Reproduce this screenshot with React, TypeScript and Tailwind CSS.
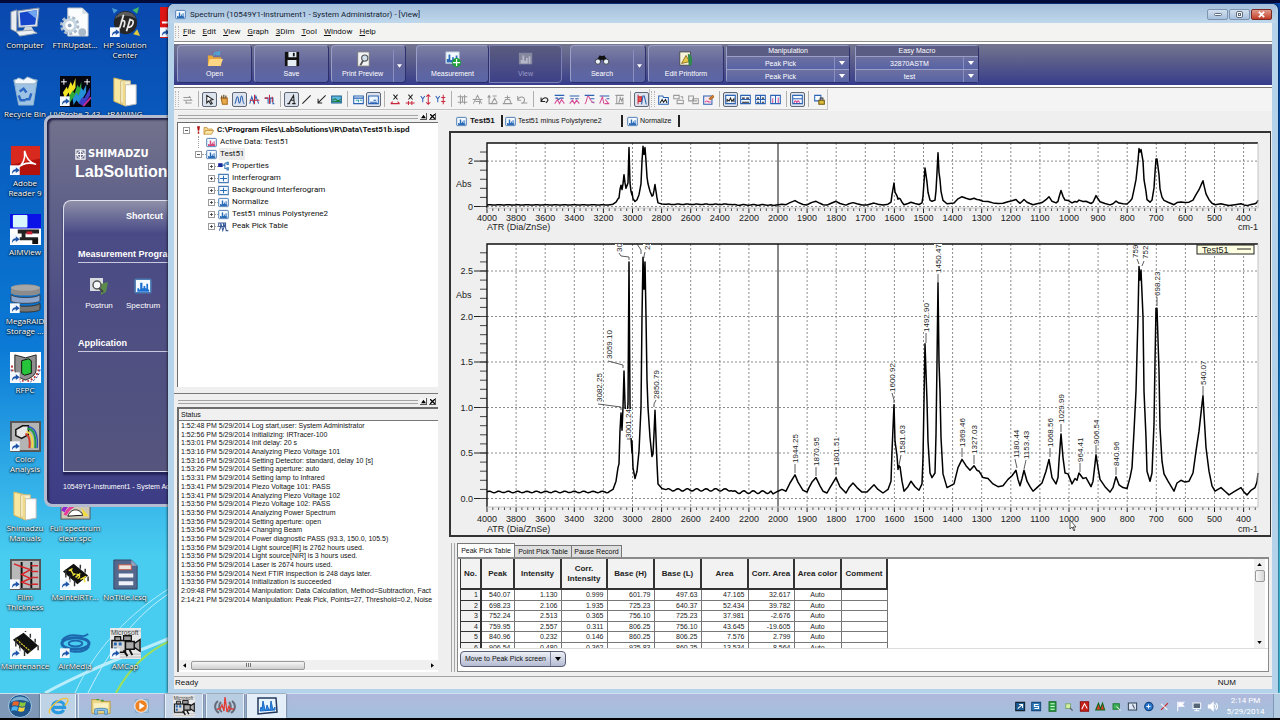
import type { ReactNode } from 'react';

type Stroke = [d: string, color: string, fill?: string];

function Glyph({ paths, className, box = 16, width = 1.5 }: { paths: Stroke[]; className: string; box?: number; width?: number }) {
  return (
    <svg viewBox={`0 0 ${box} ${box}`} className={className} fill="none" aria-hidden="true">
      {paths.map(([d, color, fill], i) => (
        <path key={i} d={d} stroke={color} strokeWidth={width} fill={fill ?? 'none'} />
      ))}
    </svg>
  );
}

/* ---------- spectrum data ---------- */

// [distance from the 4000 cm-1 edge, absorbance]
const PEAK_POINTS: [number, number][] = [
  [123, 0.08], [126, 0.1], [129, 0.19], [131, 0.34], [132, 0.38], [133, 0.75], [134, 0.94], [135, 0.75],
  [136, 1.0], [137, 1.4], [138, 1.04], [139, 0.8], [141, 1.04], [142, 2.6], [143, 1.04], [144, 0.67],
  [145, 0.5], [145, 0.63], [146, 0.34], [148, 0.22], [150, 0.3], [152, 0.52], [154, 1.0], [155, 2.0],
  [156, 2.65], [157, 2.3], [158, 2.6], [159, 2.0], [160, 1.3], [161, 1.0], [163, 0.67], [165, 0.46],
  [166, 0.49], [167, 0.71], [168, 0.97], [169, 0.67], [170, 0.38], [171, 0.16], [175, 0.11], [178, 0.1],
];

const TAIL_POINTS: [number, number][] = [
  [286, 0.05], [291, 0.08], [295, 0.1], [299, 0.08], [303, 0.17], [308, 0.26], [311, 0.18], [316, 0.09],
  [320, 0.07], [322, 0.12], [325, 0.18], [329, 0.23], [333, 0.14], [336, 0.08], [340, 0.06], [343, 0.12],
  [349, 0.23], [353, 0.13], [359, 0.06], [362, 0.12], [366, 0.17], [370, 0.12], [375, 0.07], [380, 0.07],
  [387, 0.15], [391, 0.1], [396, 0.06], [401, 0.1], [404, 0.19], [405, 0.52], [407, 1.03], [408, 0.63],
  [410, 0.47], [411, 0.32], [412, 0.36], [413, 0.35], [415, 0.19], [417, 0.08], [421, 0.13], [424, 0.19],
  [428, 0.13], [432, 0.09], [435, 0.16], [436, 0.45], [437, 1.07], [438, 1.7], [440, 1.07], [441, 0.63],
  [443, 0.28], [445, 0.23], [448, 0.28], [449, 0.7], [450, 1.5], [451, 2.37], [452, 1.5], [453, 1.18],
  [454, 0.67], [456, 0.27], [460, 0.12], [467, 0.16], [471, 0.34], [475, 0.43], [479, 0.36], [483, 0.31],
  [487, 0.36], [490, 0.31], [492, 0.3], [496, 0.23], [501, 0.22], [506, 0.16], [511, 0.13], [516, 0.14],
  [521, 0.21], [525, 0.25], [529, 0.31], [531, 0.21], [533, 0.14], [535, 0.22], [537, 0.31], [540, 0.19],
  [543, 0.13], [546, 0.08], [550, 0.12], [555, 0.17], [559, 0.3], [562, 0.43], [565, 0.23], [569, 0.16],
  [571, 0.23], [572, 0.41], [574, 0.71], [576, 0.45], [578, 0.28], [581, 0.27], [585, 0.16], [588, 0.22],
  [590, 0.2], [592, 0.28], [596, 0.22], [599, 0.23], [604, 0.13], [606, 0.19], [608, 0.38], [609, 0.48],
  [611, 0.34], [613, 0.21], [618, 0.13], [623, 0.07], [626, 0.12], [629, 0.24], [632, 0.15], [636, 0.12],
  [640, 0.11], [643, 0.23], [645, 0.34], [647, 0.74], [649, 1.18], [651, 2.0], [652, 2.55], [653, 2.4],
  [654, 2.51], [656, 2.0], [657, 1.18], [659, 0.67], [660, 0.3], [663, 0.19], [665, 0.28], [667, 0.82],
  [668, 1.5], [669, 2.09], [670, 2.09], [672, 1.4], [673, 0.78], [675, 0.41], [677, 0.27], [681, 0.19],
  [687, 0.08], [690, 0.17], [694, 0.2], [698, 0.18], [702, 0.19], [706, 0.28], [709, 0.52], [712, 0.74],
  [715, 1.04], [716, 1.13], [717, 0.93], [719, 0.56], [722, 0.3], [725, 0.14], [728, 0.08], [734, 0.12],
  [738, 0.08], [742, 0.04], [748, 0.08], [754, 0.12], [757, 0.07], [760, 0.04], [764, 0.09], [768, 0.12],
  [770, 0.18], [771, 0.28],
];

function ripple(from: number, to: number, level: number, size: number): [number, number][] {
  const out: [number, number][] = [];
  for (let x = from; x < to; x += 1) {
    out.push([x, level + size * Math.sin(x / 1.5)]);
  }
  return out;
}

const SPECTRUM = [
  ...ripple(0, 122, 0.072, 0.008),
  ...PEAK_POINTS,
  ...ripple(180, 245, 0.095, 0.013),
  ...ripple(246, 285, 0.07, 0.015),
  ...TAIL_POINTS,
];

const WAVENUMBERS = [
  4000, 3800, 3600, 3400, 3200, 3000, 2800, 2600, 2400, 2200, 2000, 1900, 1800, 1700, 1600, 1500, 1400, 1300, 1200,
  1100, 1000, 900, 800, 700, 600, 500, 400,
];

// text, x, bottom of the text, leader line
const PEAK_LABELS: [string, number, number, string][] = [
  ['3059.10', 122, 115, 'M121 117L136 121V124'],
  ['3082.25', 112, 158, 'M111 160L134 163V166'],
  ['30', 132, 8, 'M132 9L134 12L142 13V16'],
  ['', 150, 4, 'M150 0L154 6V10'],
  ['28', 160, 6, 'M158 8L157 12V14'],
  ['3001.24', 141, 194, 'M140 195h3'],
  ['2850.79', 169, 155, 'M169 156L167 160V163'],
  ['1944.25', 308, 219, 'M308 220V229'],
  ['1870.95', 329, 222, 'M329 223V232'],
  ['1801.51', 349, 222, 'M349 223V231'],
  ['1600.92', 405, 148, 'M405 149L407 156V159'],
  ['1581.63', 415, 210, 'M414 211L412 221'],
  ['1492.90', 439, 88, 'M439 89V99'],
  ['1450.47', 451, 29, 'M451 30V38'],
  ['1369.46', 475, 203, 'M475 204V213'],
  ['1327.03', 487, 210, 'M487 211V220'],
  ['1180.44', 529, 214, 'M528 215L530 224'],
  ['1153.43', 539, 215, 'M539 216L537 225'],
  ['1068.56', 563, 203, 'M563 204V213'],
  ['1029.99', 574, 179, 'M574 180V188'],
  ['964.41', 593, 218, 'M593 219V228'],
  ['906.54', 609, 200, 'M609 201V209'],
  ['840.96', 629, 222, 'M629 223V231'],
  ['759', 648, 14, 'M650 15L652 20'],
  ['752', 658, 15, 'M657 17L655 22'],
  ['698.23', 670, 52, 'M670 53V62'],
  ['540.07', 716, 141, 'M716 142V151'],
];

interface GraphProps {
  height: number;
  top: number;
  plotHeight: number;
  zero: number;
  perUnit: number;
  majors: [number, string][];
  minorStep: number;
  maxTick: number;
  absY: number;
  labelGap: number;
  captionGap: number;
  children?: ReactNode;
}

function Graph({ height, top, plotHeight, zero, perUnit, majors, minorStep, maxTick, absY, labelGap, captionGap, children }: GraphProps) {
  const y = (v: number) => zero - v * perUnit;
  const points = SPECTRUM.map(([px, v]) => `${px},${y(v).toFixed(1)}`).join(' ');
  const minors = Array.from({ length: Math.round(maxTick / minorStep) + 1 }, (_, i) => i * minorStep);
  return (
    <svg viewBox={`0 0 819 ${height}`} className="block w-full font-['Liberation_Sans',sans-serif] text-[9px]" role="img">
      <g transform={`translate(36 ${top})`}>
        <rect width="771" height={plotHeight} fill="#fff" />
        {WAVENUMBERS.map((wn, i) => (
          <g key={wn}>
            {i > 0 && (
              <line
                x1={i * 29.1}
                x2={i * 29.1}
                y2={plotHeight}
                stroke={wn === 2000 ? '#111' : '#8b8b8b'}
                strokeDasharray={wn === 2000 ? undefined : '2 2'}
              />
            )}
            <line x1={i * 29.1} x2={i * 29.1} y1={plotHeight} y2={plotHeight + 5} stroke="#222" />
            {[1, 2, 3, 4].map((n) => (
              <line key={n} x1={(i + n / 5) * 29.1} x2={(i + n / 5) * 29.1} y1={plotHeight} y2={i === 26 && n > 2 ? plotHeight : plotHeight + 3} stroke="#555" />
            ))}
            <text x={i * 29.1} y={plotHeight + labelGap} textAnchor="middle" fill="#222">{wn}</text>
          </g>
        ))}
        {majors.map(([v, label]) => (
          <g key={label}>
            <line x2="771" y1={y(v)} y2={y(v)} stroke="#8b8b8b" strokeDasharray="2 2" />
            <line x1="-13" x2="0" y1={y(v)} y2={y(v)} stroke="#222" />
            <text x="-14" y={y(v) + 3} textAnchor="end" fill="#222">{label}</text>
          </g>
        ))}
        {minors.map((v) => (
          <line key={v} x1="-7" x2="0" y1={y(v)} y2={y(v)} stroke="#444" />
        ))}
        <text x="-31" y={absY} fill="#222">Abs</text>
        <polyline points={points} fill="none" stroke="#000" strokeWidth="1.5" strokeLinejoin="round" />
        <path d={`M771 0H0V${plotHeight}`} stroke="#111" strokeWidth="1.4" fill="none" />
        <path d={`M0 ${plotHeight}H771V0`} stroke="#c4c4c4" fill="none" />
        {children}
        <text x="0" y={plotHeight + captionGap} fill="#222">ATR (Dia/ZnSe)</text>
        <text x="771" y={plotHeight + captionGap} textAnchor="end" fill="#222">cm-1</text>
      </g>
    </svg>
  );
}

function PeakLabels({ plotHeight }: { plotHeight: number }) {
  return (
    <>
      <clipPath id="plot-area">
        <rect width="771" height={plotHeight} />
      </clipPath>
      <g clipPath="url(#plot-area)" className="text-[8px]">
        {PEAK_LABELS.map(([text, x, bottom, leader]) => (
          <g key={leader}>
            {text && <rect x={x - 4} y={bottom - text.length * 4 - 1} width="8" height={text.length * 4 + 1} fill="#fff" />}
            <path d={leader} stroke="#333" strokeWidth="0.8" fill="none" />
            <text transform={`translate(${x + 3} ${bottom}) rotate(-90)`} fill="#222">{text}</text>
          </g>
        ))}
      </g>
      <rect x="710" y="1" width="57" height="9" fill="#ffffe1" stroke="#222" />
      <text x="715" y="9" fill="#222">Test51</text>
      <path d="M750 5H764" stroke="#222" />
    </>
  );
}

/* ---------- small shared pictures ---------- */

function ChartIcon({ color = '#2a6cb8', className }: { color?: string; className: string }) {
  return (
    <svg viewBox="0 0 16 16" className={className} aria-hidden="true">
      <rect x="1" y="2" width="14" height="12" rx="1" fill="#f4faff" stroke="#4c7cb4" strokeWidth="1.400" />
      <path d="M3 13V10h1.500v1h1V5h2v5h1V8h1.500v2h1V6h1.500v5h1v2z" fill={color} />
    </svg>
  );
}

function BinocularsIcon() {
  return (
    <svg viewBox="0 0 20 16" className="h-3 w-4" aria-hidden="true">
      <path d="M2 11L7 3l2 1h2l2-1 5 8-5 2-2-4H9l-2 4z" fill="#111" />
      <circle cx="4.500" cy="11.500" r="3.500" fill="#e8f2fa" stroke="#222" />
      <circle cx="15.500" cy="11.500" r="3.500" fill="#e8f2fa" stroke="#222" />
    </svg>
  );
}

function AmCapIcon({ className }: { className: string }) {
  return (
    <svg viewBox="0 0 32 32" className={className} aria-hidden="true">
      <rect width="32" height="32" fill="#e8e8e8" />
      <path d="M0 3h32M0 27h32M0 30h32" stroke="#bbb" />
      <text x="1" y="7" fontSize="7" fill="#444" className="font-['Liberation_Sans',sans-serif]">Microsoft</text>
      <path d="M2 13h14v12H2z" fill="#d6d6d6" stroke="#111" strokeWidth="1.500" />
      <path d="M4 15h3v3H4zM9 15h3v3H9zM4 20h3v3H4z" fill="#2867b0" />
      <path d="M5 9h6v4H5zM14 8h8v5h-8z" fill="#999" stroke="#111" strokeWidth="1.300" />
      <path d="M16 14h9v8h-9zM25 16l6-4v12l-6-4z" fill="#aaa" stroke="#111" strokeWidth="1.500" />
      <path d="M14 23l4 6M20 22l3 6" stroke="#111" strokeWidth="2" />
    </svg>
  );
}

/* ---------- desktop ---------- */

function Folder() {
  return (
    <svg viewBox="0 0 32 32" className="size-full">
      <path d="M4 2l12 3v26L4 26z" fill="#f7e7a0" stroke="#d3b45c" />
      <path d="M11 5h10v23H11z" fill="#f6f0d0" stroke="#ccb878" />
      <path d="M16 9h11v20l-11 2z" fill="#fff" stroke="#b9b9b9" />
      <path d="M16 31V7l-3-1v23z" fill="#efd98a" />
    </svg>
  );
}

const DESKTOP_ICONS: { label: string; col: number; row: number; shortcut?: boolean; art: ReactNode }[] = [
  {
    label: 'Computer', col: 1, row: 1,
    art: (
      <>
        <path d="M1 5l6-2v23l-6-3z" fill="#e9edf2" stroke="#8b98a8" />
        <path d="M8 4l22-3-2 19-19 1z" fill="#dfe6ee" stroke="#8b98a8" />
        <path d="M10 6l18-3-2 15-15 1z" fill="#1545c8" />
        <path d="M18 5l10-2-1 9z" fill="#6fa5f0" />
        <path d="M16 20l6 0 3 5H13z" fill="#cfd6de" />
        <path d="M6 25l17-1 5 3-18 3z" fill="#eef1f5" stroke="#9aa6b3" />
      </>
    ),
  },
  {
    label: 'Recycle Bin', col: 1, row: 2,
    art: (
      <>
        <path d="M4 4h24l-4 26H9z" fill="#b9d6ea" stroke="#8fb4cf" fillOpacity="0.85" />
        <path d="M4 5l5-3 5 2 4-3 5 2 5 2-3 3H6z" fill="#f1f7fb" stroke="#9db7c9" />
        <path d="M10 16l4-3 3 4M9 20l2 5h5M22 18l-2 6-4 0" stroke="#2b68c4" strokeWidth="2.500" fill="none" />
      </>
    ),
  },
  {
    label: 'Adobe\nReader 9', col: 1, row: 3, shortcut: true,
    art: (
      <>
        <rect x="1" y="1" width="30" height="30" fill="#b3120d" />
        <path d="M1 1h30v13L1 20z" fill="#d8291e" />
        <path d="M15 6c2 8 5 12 12 14-8-3-14-1-20 4 6-3 9-9 8-18z" stroke="#fff" strokeWidth="1.600" fill="none" />
      </>
    ),
  },
  {
    label: 'AIMView', col: 1, row: 4, shortcut: true,
    art: (
      <>
        <rect width="32" height="32" fill="#fff" />
        <path d="M0 0h32v15H0z" fill="#0b12e8" />
        <rect x="3" y="1" width="15" height="13" rx="1" fill="#d8f6fb" />
        <path d="M8 16h22v4H8zM12 20h4v4h-4zM5 24h24v3H5z" fill="#222" />
        <path d="M17 18h6v3h-6z" fill="#c23" />
        <path d="M23 26h6v5h-6z" fill="#111" />
      </>
    ),
  },
  {
    label: 'MegaRAID\nStorage ...', col: 1, row: 5, shortcut: true,
    art: (
      <>
        <path d="M1 5c0-5 30-5 30 0v5c0 4-30 4-30 0z" fill="#8c8c8c" />
        <path d="M1 12c4 4 26 4 30 0v6c0 4-30 4-30 0z" fill="#8fa6cc" stroke="#3a4250" />
        <path d="M1 21c4 4 26 4 30 0v6c0 4-30 4-30 0z" fill="#767676" stroke="#333" />
        <ellipse cx="16" cy="5" rx="15" ry="3" fill="#a7a7a7" />
      </>
    ),
  },
  {
    label: 'RFPC', col: 1, row: 6, shortcut: true,
    art: (
      <>
        <rect width="32" height="32" fill="#fff" />
        <path d="M5 3l11 3 11-3v15c0 6-6 9-11 11C10 27 5 24 5 18z" fill="#8f8f8f" stroke="#222" />
        <path d="M12 9l7-2 3 2v13l-7 2-3-2z" fill="#25c43a" stroke="#111" />
        <path d="M2 14c0 9 5 14 12 16M30 14c0 9-5 14-12 16" stroke="#b33" strokeWidth="2" strokeDasharray="2 2" fill="none" />
        <path d="M1 18c1 7 5 11 10 13M31 18c-1 7-5 11-10 13" stroke="#223a9c" strokeDasharray="2 2" fill="none" />
      </>
    ),
  },
  {
    label: 'Color\nAnalysis', col: 1, row: 7, shortcut: true,
    art: (
      <>
        <rect x="1" y="1" width="30" height="30" fill="#b4b4b4" stroke="#555" strokeWidth="2" />
        <path d="M6 9l7-4h6v9l-7 4-6-3z" fill="#e8e8e8" stroke="#111" strokeWidth="1.500" />
        <path d="M19 6c8 1 10 10 9 22" stroke="#2a50c4" strokeWidth="1.500" fill="none" />
        <path d="M18 8c7 0 9 8 8 20" stroke="#1c9a45" strokeWidth="2" fill="none" />
        <path d="M17 11c5 1 7 8 6 17" stroke="#f0d93b" strokeWidth="2" fill="none" />
        <path d="M16 13c4 2 5 8 4 15" stroke="#d63a2a" strokeWidth="2" fill="none" />
      </>
    ),
  },
  { label: 'Shimadzu\nManuals', col: 1, row: 8, art: <Folder /> },
  {
    label: 'Film\nThickness', col: 1, row: 9, shortcut: true,
    art: (
      <>
        <rect x="1" y="1" width="30" height="30" fill="#b9b9b9" stroke="#555" strokeWidth="2" />
        <path d="M12 3v27M22 3v27" stroke="#111" strokeWidth="2" />
        <path d="M4 5l8 3 9 3-9 5 9 4-9 4 9 3M22 7h7M22 13h7M22 19h7M22 26h7" stroke="#d8262a" strokeWidth="1.500" fill="none" />
      </>
    ),
  },
  {
    label: 'Maintenance', col: 1, row: 10, shortcut: true,
    art: (
      <>
        <rect width="32" height="32" fill="#fff" />
        <path d="M3 12l11-7 15 13-11 9z" fill="#111" />
        <path d="M6 10v9M10 16v8M15 22v7M16 4v-1M21 10V6M26 15v-4M29 18v5" stroke="#333" strokeWidth="1.500" />
        <path d="M7 12l14 12" stroke="#d8c93a" strokeWidth="1.300" strokeDasharray="2 1" />
      </>
    ),
  },
  {
    label: 'FTIRUpdat...', col: 2, row: 1,
    art: (
      <>
        <path d="M8 1h15l6 6v23H8z" fill="#fbfcfd" stroke="#b6c2cc" />
        <path d="M23 1v6h6z" fill="#d4dde4" />
        <circle cx="10" cy="19" r="8" fill="none" stroke="#a9bacb" strokeWidth="4" strokeDasharray="3 2" />
        <circle cx="10" cy="19" r="6" fill="#fff" stroke="#c8d6e2" strokeWidth="3" />
        <circle cx="10" cy="19" r="2" fill="#8fa6bb" />
        <circle cx="23" cy="26" r="4" fill="#a9b9c8" />
      </>
    ),
  },
  {
    label: 'UVProbe 2.43', col: 2, row: 2, shortcut: true,
    art: (
      <>
        <rect width="32" height="32" fill="#050510" />
        <path d="M3 17l4-6 1 3 3-8 2 4 3-8v10l-6 9-1-4-4 6z" fill="#f2e425" />
        <path d="M9 22l4-7 2 3 3-9 2 3 2-6v9l-7 12-2-4-3 5z" fill="#2fa93a" />
        <path d="M13 24l4-7 2 3 3-8 2 3 3-6v8l-7 12-3-4-3 5z" fill="#2390d8" />
        <path d="M19 28l4-6 2 1 6-11v8l-7 11z" fill="#3c3cc8" />
        <path d="M24 31l8-9" stroke="#c22a9a" strokeWidth="2" />
        <path d="M4 3v6M1 6h6M28 3v6M25 6h6" stroke="#fff" />
      </>
    ),
  },
  {
    label: 'Full spectrum\nclear.spc', col: 2, row: 8,
    art: (
      <>
        <rect x="1" y="2" width="30" height="28" fill="#cfc8b6" stroke="#555" />
        <path d="M3 22C8 12 13 10 20 8" stroke="#8c2ad0" strokeWidth="4" fill="none" />
        <path d="M5 26c4-8 9-11 16-13" stroke="#e83a9a" strokeWidth="3" fill="none" />
        <path d="M8 27c4-9 12-8 16-1z" fill="#fff" stroke="#111" />
        <path d="M22 18l8 9h-6z" fill="#f0dc40" />
      </>
    ),
  },
  {
    label: 'MainteIRTr...', col: 2, row: 9, shortcut: true,
    art: (
      <>
        <rect width="32" height="32" fill="#fff" />
        <path d="M3 13l11-8 15 12-11 9z" fill="#111" />
        <path d="M6 11v8M10 17v7M15 22v6M21 10V6M26 14v-4M29 18v5" stroke="#333" strokeWidth="1.500" />
        <path d="M9 12l4-2M11 11l3 5M13 17l3-2M16 19l5-4M17 16c4-1 4 4 1 4M21 21l6-3M24 19l2 5" stroke="#efe43a" strokeWidth="1.500" fill="none" />
      </>
    ),
  },
  {
    label: 'AirMedia', col: 2, row: 10, shortcut: true,
    art: (
      <g fill="none" stroke="#1c68ae">
        <ellipse cx="16" cy="16" rx="14" ry="6" strokeWidth="3" />
        <ellipse cx="16" cy="16" rx="7" ry="3" strokeWidth="2" />
        <path d="M2 13c4-6 12-6 18-5 4 1 7 0 9-2M30 19c-4 6-12 6-18 5-4-1-7 0-9 2" strokeWidth="2" />
      </g>
    ),
  },
  {
    label: 'HP Solution\nCenter', col: 3, row: 1, shortcut: true,
    art: (
      <>
        <circle cx="16" cy="16" r="12" fill="#262626" />
        <path d="M5 12a12 12 0 0 1 22 0c-6-4-16-4-22 0z" fill="#5c5c5c" />
        <path d="M14 8l-4 14M11 15c5-3 5 1 3 6M21 12l-4 13M20 14c6-3 5 7-2 7" stroke="#e8e8e8" strokeWidth="1.800" fill="none" />
        <path d="M2 1l6 2-4 4z" fill="#4a9bd4" />
        <path d="M30 0l-7 3 5 4z" fill="#42b96a" />
        <path d="M31 30l-7-2 4-5z" fill="#e0c83c" />
      </>
    ),
  },
  { label: 'tRAINING', col: 3, row: 2, art: <Folder /> },
  {
    label: 'NoTitle.icsq', col: 3, row: 9,
    art: (
      <>
        <path d="M4 1h18l6 6v24H4z" fill="#53688c" stroke="#35486a" />
        <path d="M22 1v6h6z" fill="#94a4be" />
        <path d="M9 6h13v5H9z" fill="#f0e4e0" stroke="#c45a48" />
        <path d="M9 15h15v4H9zM9 23h15v4H9z" fill="#eef2f8" />
      </>
    ),
  },
  { label: 'AMCap', col: 3, row: 10, shortcut: true, art: <AmCapIcon className="size-full" /> },
  {
    label: 'IRs', col: 4, row: 1, shortcut: true,
    art: (
      <>
        <rect width="32" height="32" fill="#dd1414" />
        <path d="M2 16h8l3-4 3 8 3-4h10" stroke="#fff" strokeWidth="2" fill="none" />
      </>
    ),
  },
];

function DesktopIcons() {
  return (
    <ul className="grid w-[200px] grid-cols-[50px_50px_50px_50px] grid-rows-[repeat(10,69px)] pt-[7px]">
      {DESKTOP_ICONS.map((icon) => (
        <li key={icon.label} style={{ gridColumn: icon.col, gridRow: icon.row }}>
          <button className="flex w-[50px] flex-col items-center gap-0.5">
            <svg viewBox="0 0 32 32" className="size-[31px]" aria-hidden="true">
              {icon.art}
              {icon.shortcut && (
                <>
                  <rect x="0" y="21" width="10" height="10" fill="#f4f8ff" />
                  <path d="M2 30c0-4 2-5 4-5v-2l4 3-4 3v-2c-2 0-3 1-4 3z" fill="#1d54a8" />
                </>
              )}
            </svg>
            <span className="text-center text-[8px] leading-[10px] whitespace-pre text-white [text-shadow:0_1px_2px_#000,0_0_2px_#000]">
              {icon.label}
            </span>
          </button>
        </li>
      ))}
    </ul>
  );
}

function Rays() {
  return (
    <svg viewBox="0 0 170 220" className="absolute bottom-0 left-0 w-[170px]" aria-hidden="true">
      <path d="M45 220C90 195 135 180 170 165" stroke="#d4f6ff" strokeWidth="3" fill="none" opacity="0.8" />
      <path d="M75 220C95 175 130 140 170 115" stroke="#b4ecff" strokeWidth="1" fill="none" />
      <path d="M88 220c22-45 50-80 82-100" stroke="#c4f0ff" strokeWidth="1" fill="none" />
      <path d="M116 220c14-26 32-42 54-52" stroke="#9fe05a" strokeWidth="2" fill="none" />
    </svg>
  );
}

function LabSolutionsWindow() {
  return (
    <section className="absolute top-[115px] left-[44px] flex h-[392px] w-[160px] flex-col overflow-hidden rounded-lg border-3 border-[#b6bccf] bg-linear-to-b from-[#72728c] via-[#4c4c84] to-[#3d3d86] pl-4 whitespace-nowrap text-white shadow-[inset_2px_2px_2px_#22224a]">
      <header className="mt-7 ml-3">
        <div className="flex items-center gap-0.5">
          <svg viewBox="0 0 12 12" className="size-[11px]" aria-hidden="true">
            <path d="M1 1h10v10H1z" fill="none" stroke="#fff" strokeWidth="1.300" />
            <circle cx="6" cy="6" r="3.500" fill="none" stroke="#fff" />
            <path d="M6 1v10M1 6h10" stroke="#fff" />
          </svg>
          <span className="font-['DejaVu_Sans',sans-serif] text-[10px] leading-4 font-bold">SHIMADZU</span>
        </div>
        <h2 className="font-['Liberation_Sans',sans-serif] text-[16px] leading-5 font-bold">LabSolutions</h2>
      </header>
      <div className="mt-[18px] h-[272px] rounded-tl-lg border-t border-b border-l border-[#dfe0ee] bg-linear-to-b from-[#9090a8] from-0% via-[#4a4a86] via-12% to-[#55557e] pl-[14px] font-['Liberation_Sans',sans-serif] shadow-[0_3px_2px_#24245a]">
        <h3 className="mt-[9px] ml-12 text-[9px] leading-3 font-bold">Shortcut</h3>
        <h3 className="mt-[26px] border-b border-[#c9c9dd] pb-0.5 text-[9px] leading-3 font-bold">Measurement Progra</h3>
        <div className="mt-[14px] flex gap-3 pl-[5px] text-[8px] leading-[10px]">
          <button className="flex w-8 flex-col items-center gap-1.5">
            <svg viewBox="0 0 20 18" className="h-[18px] w-5" aria-hidden="true">
              <path d="M1 1h13v13H1z" fill="#d9dde2" />
              <path d="M12 7l7-2-2 10-5 3z" fill="#5b8a4a" />
              <circle cx="8" cy="8" r="4" fill="#f5f7fa" stroke="#555" strokeWidth="1.500" />
              <path d="M10 11l4 4" stroke="#444" strokeWidth="2" />
            </svg>
            Postrun
          </button>
          <button className="flex w-8 flex-col items-center gap-1.5">
            <ChartIcon color="#1c6fd2" className="h-[18px] w-5" />
            Spectrum
          </button>
        </div>
        <h3 className="mt-[26px] border-b border-[#c9c9dd] pb-0.5 text-[9px] leading-3 font-bold">Application</h3>
      </div>
      <p className="mt-[10px] font-['Liberation_Sans',sans-serif] text-[7px] leading-[10px]">10549Y1-Instrument1 - System Ad</p>
    </section>
  );
}

/* ---------- application window ---------- */

const MENUS = ['File', 'Edit', 'View', 'Graph', '3Dim', 'Tool', 'Window', 'Help'];

const RIBBON_BUTTON =
  'flex h-[38px] flex-col items-center justify-end gap-0.5 rounded-sm border border-[#9a9fc8] border-r-[#2c2f6c] border-b-[#2c2f6c] bg-linear-to-b from-[#7d80a4] via-[#62659a] to-[#5a66a8] pb-1';

function TitleBar() {
  return (
    <header className="flex h-[19px] items-center gap-1 pt-0.5 pl-px text-[#111c33]">
      <ChartIcon className="size-[11px]" />
      <h1 className="flex-1 font-['Roboto',sans-serif] text-[8px] leading-3">Spectrum (10549Y1-Instrument1 - System Administrator) - [View]</h1>
      <div className="flex gap-px">
        <button aria-label="Minimize" className="flex h-[11px] w-[21px] items-center justify-center rounded-xs border border-[#7d93b0] bg-linear-to-b from-[#d3e0ee] to-[#a7c0dc]">
          <span className="h-[3px] w-2 rounded-xs border border-[#5c6b80] bg-white" />
        </button>
        <button aria-label="Maximize" className="flex h-[11px] w-[21px] items-center justify-center rounded-xs border border-[#7d93b0] bg-linear-to-b from-[#d3e0ee] to-[#a7c0dc]">
          <span className="flex size-[7px] items-center justify-center rounded-xs border border-[#5c6b80] bg-white">
            <span className="size-[3px] border border-[#5c6b80]" />
          </span>
        </button>
        <button aria-label="Close" className="flex h-[11px] w-[21px] items-center justify-center rounded-xs border border-[#7a2a22] bg-linear-to-b from-[#e09a8c] to-[#c03a22]">
          <svg viewBox="0 0 8 8" className="size-[7px]" aria-hidden="true">
            <path d="M1 1l6 6M7 1L1 7" stroke="#fff" strokeWidth="2" />
          </svg>
        </button>
      </div>
    </header>
  );
}

function RibbonMacro({ title, rows }: { title: string; rows: string[] }) {
  return (
    <div className="flex h-[38px] w-[124px] flex-col rounded-sm border border-[#9a9fc8] border-r-[#2c2f6c] border-b-[#2c2f6c]">
      <div className="bg-[#5a5c84] text-center leading-[10px]">{title}</div>
      {rows.map((row, i) => (
        <button key={i} className="flex h-[13px] items-center border-t border-[#9a9fc8] bg-linear-to-b from-[#6d70a0] to-[#5763a6]">
          <span className="flex-1 text-center">{row}</span>
          <span className="flex h-full w-[15px] items-center justify-center border-l border-[#8a8fc0]">
            <svg viewBox="0 0 6 4" className="h-1 w-1.5" aria-hidden="true">
              <path d="M0 0h6L3 4z" fill="#fff" />
            </svg>
          </span>
        </button>
      ))}
    </div>
  );
}

function DropArrow() {
  return (
    <span className="flex h-full w-3 items-center justify-center border-l border-[#8a8fc0]">
      <svg viewBox="0 0 6 4" className="h-1 w-[5px]" aria-hidden="true">
        <path d="M0 0h6L3 4z" fill="#fff" />
      </svg>
    </span>
  );
}

function Ribbon() {
  return (
    <div className="flex h-[41px] items-start bg-linear-to-b from-[#74768f] via-[#56588a] to-[#373c8c] pt-px pl-[3px] font-['Liberation_Sans',sans-serif] text-[7px] leading-[9px] text-white">
      <div className="flex gap-0.5">
        <button className={`${RIBBON_BUTTON} w-[75px]`}>
          <svg viewBox="0 0 18 18" className="h-4 w-[18px]" aria-hidden="true">
            <path d="M1 5h5l1 2h9v10H1z" fill="#e8a83a" />
            <path d="M3 9h15l-3 8H1z" fill="#ffd784" />
            <path d="M8 5c0-4 5-4 6-2M14 0v4h-4" stroke="#4ba8d8" strokeWidth="1.600" fill="none" />
          </svg>
          Open
        </button>
        <button className={`${RIBBON_BUTTON} w-[75px]`}>
          <svg viewBox="0 0 18 18" className="size-4" aria-hidden="true">
            <path d="M1 1h16v16H1z" fill="#111" />
            <path d="M5 1h9v6H5zM4 10h10v7H4z" fill="#e4ecf4" />
            <path d="M10 2h2v4h-2z" fill="#111" />
          </svg>
          Save
        </button>
        <div className={`${RIBBON_BUTTON} w-[75px]`}>
          <div className="-mb-1 flex h-full w-full">
            <button className="flex h-full flex-1 flex-col items-center justify-end gap-0.5 pb-1">
              <svg viewBox="0 0 18 18" className="size-4" aria-hidden="true">
                <path d="M3 1h13v16H3z" fill="#f2f3f5" stroke="#777" />
                <circle cx="11" cy="8" r="3.500" fill="#cfe0ec" stroke="#555" strokeWidth="1.300" />
                <path d="M9 11l-3 5" stroke="#555" strokeWidth="2" />
              </svg>
              Print Preview
            </button>
            <button aria-label="Print options" className="flex h-full">
              <DropArrow />
            </button>
          </div>
        </div>
      </div>
      <div className="ml-2.5 flex">
        <button className={`${RIBBON_BUTTON} w-[73px]`}>
          <svg viewBox="0 0 18 18" className="size-4" aria-hidden="true">
            <path d="M1 1h15v13H1z" fill="#f4faff" stroke="#aebfce" />
            <path d="M2 13V9h2V4h2v6h2V7h2v6zM12 13V5h2v8z" fill="#2a6cb8" />
            <circle cx="13" cy="13" r="5" fill="#18a032" />
            <path d="M9 13h8M13 9v8" stroke="#fff" strokeWidth="1.400" />
          </svg>
          Measurement
        </button>
        <button disabled className="flex h-[38px] w-[73px] flex-col items-center justify-end gap-0.5 rounded-r-sm border border-[#7d80b4] bg-linear-to-b from-[#5b5c7e] to-[#3e4088] pb-1 text-[#9a9cc8]">
          <svg viewBox="0 0 18 18" className="size-4" aria-hidden="true">
            <path d="M1 2h15v13H1z" fill="#85879f" />
            <path d="M3 14v-4h2V5h2v6h2V8h2v6zM12 14V6h2v8z" fill="#b5b7c8" />
          </svg>
          View
        </button>
      </div>
      <div className="ml-2 flex gap-0.5">
        <div className={`${RIBBON_BUTTON} w-[76px]`}>
          <div className="-mb-1 flex h-full w-full">
            <button className="flex h-full flex-1 flex-col items-center justify-end gap-1 pb-1">
              <BinocularsIcon />
              Search
            </button>
            <button aria-label="Search options" className="flex h-full">
              <DropArrow />
            </button>
          </div>
        </div>
        <button className={`${RIBBON_BUTTON} w-[76px]`}>
          <svg viewBox="0 0 18 18" className="size-4" aria-hidden="true">
            <path d="M2 1h12v15H2z" fill="#f7f3dc" stroke="#444" />
            <path d="M4 14l5-9 4 7z" fill="#e8c84a" stroke="#8a6a1a" />
            <path d="M11 3c5 1 6 6 4 13h-3z" fill="#2f8a4a" />
          </svg>
          Edit Printform
        </button>
        <RibbonMacro title="Manipulation" rows={['Peak Pick', 'Peak Pick']} />
        <span className="w-px" />
        <RibbonMacro title="Easy Macro" rows={['32870ASTM', 'test']} />
      </div>
    </div>
  );
}

const K = '#222';
const B = '#2b62b4';
const R = '#c8283c';
const G = '#9a9a9a';
const P = '#d84a94';

const TOOL_GROUPS: { name: string; on?: boolean; paths: Stroke[] }[][] = [
  [{ name: 'Align', paths: [['M2 5h10l-2-2M2 9h12l-2-2M5 13h9M6 10v4', G]] }],
  [
    { name: 'Select', on: true, paths: [['M4 2l9 6-4 1 3 5-2 1-3-5-3 3z', K, '#fff']] },
    { name: 'Pan', paths: [['M3 6h9v9H5z', '#a86a1c', '#e8a84a'], ['M4 6V2M7 6V1M10 6V2', '#5a3a10']] },
    { name: 'Spectrum', on: true, paths: [['M1 14c2 0 2-10 4-10s1 9 3 9 1-10 3-10 1 11 4 11', B]] },
    { name: 'Cross cursor', paths: [['M1 14l3-10 3 9 3-10 4 11', B], ['M1 9h14M8 1v14', R]] },
    { name: 'Peak cursor', paths: [['M1 6h5v8M9 14V6h4v8h2', B], ['M1 6h5M8 1v13M12 4v8', R]] },
  ],
  [
    { name: 'Text', on: true, paths: [['M2 14h4M9 14h5M4 14L11 2l1 12M6 9h6', K]] },
    { name: 'Line', paths: [['M2 14L14 2', K]] },
    { name: 'Arrow', paths: [['M3 13L14 2M3 7v6h6', K]] },
    { name: 'Picture', paths: [['M1 3h14v10H1z', '#1d5c8c', '#5cb8e0'], ['M2 11h12M2 9l4-2 4 3 4-2', '#1f7a34']] },
  ],
  [
    { name: 'Top legend', paths: [['M1 3h14v11H1zM1 6h14', B, '#eef6ff'], ['M4 9h4v3M10 9h3', '#3aa0a8']] },
    { name: 'Legend', on: true, paths: [['M1 3h14v11H1z', B, '#eef6ff'], ['M3 12h10M8 9h4', B]] },
  ],
  [
    { name: 'X expand', paths: [['M5 1l6 7M11 1L5 8', K], ['M1 14h13M4 11l-3 3M11 11l3 3', R]] },
    { name: 'X shrink', paths: [['M5 1l6 7M11 1L5 8', K], ['M1 13h13M5 10v6M10 10v6', R]] },
    { name: 'Y expand', paths: [['M1 3l3 4 3-4M4 7v5', B], ['M12 1v14M9 4l3-3 3 3M9 12l3 3 3-3', R]] },
    { name: 'Y shrink', paths: [['M1 3l3 4 3-4M4 7v5', B], ['M12 1v14M9 5h6M9 11h6', R]] },
  ],
  [
    { name: 'Baseline', paths: [['M1 4h14M1 12h14M5 1v14M11 1v14M8 4v8', G]] },
    { name: 'Smooth', paths: [['M2 14l6-12 6 12M1 8h14M5 11h6v4', G]] },
    { name: 'Derivative', paths: [['M3 2v12h12M7 13l4-7 4 7M1 5l2-3 2 3M8 3h6', G]] },
    { name: 'Deconvolve', paths: [['M1 14h14M3 13l2-5h6l2 5M8 2v6M4 5h8', G]] },
    { name: 'Undo zoom', paths: [['M1 3v6h5M1 9c2-6 9-6 10-1M6 13h9M11 8c0 3-2 5-4 6', G]] },
  ],
  [
    { name: 'Undo', paths: [['M3 5v6h6M3 11c3-7 9-7 10-2-1 2-2 3-3 4', K]] },
    { name: 'Zoom peaks', paths: [['M1 2h14M2 6h3l2 2 2-2h5', B], ['M1 14l4-6 3 6 3-6 4 6', P]] },
    { name: 'Split peaks', paths: [['M1 3h14M2 7h5M9 7h5', B], ['M1 14l4-5 3 5 3-5 4 5', P]] },
    { name: 'Drop peaks', paths: [['M1 2h14M9 7h6M11 12h4', B], ['M1 14c3 0 3-11 5-11s3 10 9 10', P]] },
    { name: 'Shift peaks', paths: [['M1 3h14M11 7h4', B], ['M1 14l4-10 2 10M8 14h7M9 8l5 6', P]] },
    { name: 'Scale', paths: [['M2 2h12M2 14h12M4 2v12M7 14l2-9 2 5 2-5v9', G]] },
  ],
  [{ name: 'Overlay', on: true, paths: [['M3 1v14M3 4h5v7H3', R, '#e8584a'], ['M8 15L10 3h2l3 12', B]] }],
];

const VIEW_GROUPS: { name: string; on?: boolean; paths: Stroke[] }[][] = [
  [
    { name: 'Open graph', paths: [['M1 3h6l1 2h7v10H1z', B, '#eef6ff'], ['M3 13l3-5 2 4 3-4 2 5', K]] },
    { name: 'Copy graph', paths: [['M1 2h8v5H1zM6 9h9v5H6zM11 4h3v3', G]] },
    { name: 'Paste graph', paths: [['M1 3h7v7H1zM7 7h8v7H7zM9 10h4', G]] },
    { name: 'Edit graph', paths: [['M1 3h12v12H1z', B, '#fbe8ee'], ['M3 12c3-5 5 2 8-1', P], ['M9 7l5-5 2 2-5 4z', '#b8641c', '#e8a04a']] },
  ],
  [
    { name: 'Single view', on: true, paths: [['M1 2h14v12H1z', B, '#f4faff'], ['M3 12V8l3 2 2-4 2 5 3-4v5', K]] },
    { name: 'Two rows', paths: [['M1 2h14v12H1zM1 8h14', B, '#f4faff'], ['M3 6h4M9 6h4M3 12h10', K]] },
    { name: 'Four panes', paths: [['M1 2h14v12H1zM1 8h14M8 2v12', B, '#f4faff'], ['M3 6h3M10 6h3M3 12h3M10 12h3', K]] },
    { name: 'Two columns', paths: [['M1 2h14v12H1zM8 2v12', B, '#f4faff'], ['M4 13V6M12 13V5', P]] },
  ],
  [{ name: 'Split print', on: true, paths: [['M1 2h14v12H1zM1 7h14', B, '#f4faff'], ['M3 13c1-4 3-4 4 0 1-4 3-4 4 0', P]] }],
  [{ name: 'Lock', paths: [['M1 2h9v8H1z', B, '#f4faff'], ['M7 9h8v6H7z', '#6e5a14', '#e0bc3a'], ['M9 9V6h4v3', '#444']] }],
];

function ToolBar({ groups }: { groups: typeof TOOL_GROUPS }) {
  return (
    <div role="toolbar" className="flex h-[21px] items-center border-r border-b border-[#c2c2c2]">
      <span className="mx-px h-4 w-1 border-x border-dotted border-[#b4b4b4]" />
      {groups.map((group, i) => (
        <div key={group[0].name} className="flex items-center">
          {i > 0 && <span className="mx-[3px] h-4 w-px bg-[#b0b0b0]" />}
          {group.map((tool) => (
            <button
              key={tool.name}
              aria-label={tool.name}
              className={
                tool.on
                  ? 'flex size-[15px] items-center justify-center rounded-xs border border-[#5f6878] bg-[#dde3ec]'
                  : 'flex size-[15px] items-center justify-center'
              }
            >
              <Glyph paths={tool.paths} className="size-[11px]" />
            </button>
          ))}
        </div>
      ))}
    </div>
  );
}

function DockHeader() {
  return (
    <div className="flex h-[11px] items-center gap-0.5 pr-0.5 pl-1">
      <span className="h-1 flex-1 border-y border-[#a4a4a4]" />
      <button aria-label="Pin" className="flex size-[7px] items-center justify-center border-r border-b border-[#555] bg-[#f6f6f6]">
        <svg viewBox="0 0 6 6" className="size-[5px]" aria-hidden="true">
          <path d="M0 5h6L3 1z" />
        </svg>
      </button>
      <button aria-label="Close" className="flex size-[7px] items-center justify-center border-r border-b border-[#555] bg-[#f6f6f6]">
        <svg viewBox="0 0 6 6" className="size-[5px]" aria-hidden="true">
          <path d="M0 0l6 6M6 0L0 6" stroke="#000" strokeWidth="1.500" />
        </svg>
      </button>
    </div>
  );
}

function Expander({ open }: { open?: boolean }) {
  return (
    <button aria-label={open ? 'Collapse' : 'Expand'} className="flex size-[7px] items-center justify-center border border-[#9a9a9a] bg-white">
      <svg viewBox="0 0 5 5" className="size-[5px]" aria-hidden="true">
        <path d={open ? 'M1 2.500h3' : 'M1 2.500h3M2.500 1v3'} stroke="#333" strokeWidth="0.800" />
      </svg>
    </button>
  );
}

function CrossIcon() {
  return <Glyph className="size-[11px]" paths={[['M1 2h14v12H1z', '#4c7cb4', '#f4faff'], ['M3 8h10M8 4v8', '#2a6cb8']]} />;
}

const TREE_NODES: { label: string; icon: ReactNode }[] = [
  { label: 'Properties', icon: <Glyph className="size-[11px]" paths={[['M1 4h5v4H1z', '#1a2a9c', '#1a2a9c'], ['M6 6h4M10 3v8h2M10 3h2M13 2h2v3h-2zM13 10h2v3h-2z', '#3a78b8']]} /> },
  { label: 'Interferogram', icon: <CrossIcon /> },
  { label: 'Background Interferogram', icon: <CrossIcon /> },
  { label: 'Normalize', icon: <ChartIcon className="size-[11px]" /> },
  { label: 'Test51 minus Polystyrene2', icon: <ChartIcon className="size-[11px]" /> },
  { label: 'Peak Pick Table', icon: <Glyph className="size-[11px]" paths={[['M1 3h10v5H1zM4 3v5M8 3v5', '#3a5a98'], ['M2 14l3-8 2 8 3-9 2 9h3', '#3a5a98']]} /> },
];

function DataTree() {
  return (
    <div className="ml-[3px] h-[265px] overflow-hidden border-t border-l border-[#6c6c6c] bg-white pt-px font-['Roboto',sans-serif] text-[8px] leading-3 whitespace-nowrap text-[#111]">
      <div className="flex h-3 items-center gap-[3px] pl-[5px]">
        <Expander open />
        <span className="w-px" />
        <svg viewBox="0 0 4 10" className="h-2 w-[3px]" aria-hidden="true">
          <path d="M0 0h4L3 6H1zM1 7h2v3H1z" fill="#b01818" />
        </svg>
        <svg viewBox="0 0 14 12" className="h-[9px] w-[11px]" aria-hidden="true">
          <path d="M1 11V2h4l1 2h6v2" fill="#f4d890" stroke="#c08a34" />
          <path d="M3 6h11l-3 5H1z" fill="#fbe4a4" stroke="#c08a34" />
        </svg>
        <strong className="text-[8px]">C:\Program Files\LabSolutions\IR\Data\Test51b.ispd</strong>
      </div>
      <div className="ml-5 border-l border-dotted border-[#a0a0a0] pl-[7px]">
        <div className="flex h-3 items-center gap-[3px]">
          <ChartIcon color="#d8487c" className="size-[11px]" />
          Active Data: Test51
        </div>
      </div>
      <div className="flex h-3 items-center pl-[17px]">
        <Expander open />
        <span className="w-1 border-t border-dotted border-[#a0a0a0]" />
        <ChartIcon className="size-[11px]" />
        <span className="ml-0.5 bg-[#ececec] px-px">Test51</span>
      </div>
      <ul>
        {TREE_NODES.map((node) => (
          <li key={node.label} className="flex h-3 items-center pl-[30px]">
            <Expander />
            <span className="w-[3px] border-t border-dotted border-[#a0a0a0]" />
            {node.icon}
            <span className="ml-[3px]">{node.label}</span>
          </li>
        ))}
      </ul>
    </div>
  );
}

const LOG = [
  '1:52:48 PM 5/29/2014 Log start,user: System Administrator',
  '1:52:56 PM 5/29/2014 Initializing: IRTracer-100',
  '1:53:01 PM 5/29/2014 Init delay: 20 s',
  '1:53:16 PM 5/29/2014 Analyzing Piezo Voltage 101',
  '1:53:16 PM 5/29/2014 Setting Detector: standard, delay 10 [s]',
  '1:53:26 PM 5/29/2014 Setting aperture: auto',
  '1:53:31 PM 5/29/2014 Setting lamp to Infrared',
  '1:53:41 PM 5/29/2014 Piezo Voltage 101: PASS',
  '1:53:41 PM 5/29/2014 Analyzing Piezo Voltage 102',
  '1:53:56 PM 5/29/2014 Piezo Voltage 102: PASS',
  '1:53:56 PM 5/29/2014 Analyzing Power Spectrum',
  '1:53:56 PM 5/29/2014 Setting aperture: open',
  '1:53:56 PM 5/29/2014 Changing Beam',
  '1:53:56 PM 5/29/2014 Power diagnostic PASS (93.3, 150.0, 105.5)',
  '1:53:56 PM 5/29/2014 Light source[IR] is 2762 hours used.',
  '1:53:56 PM 5/29/2014 Light source[NIR] is 3 hours used.',
  '1:53:56 PM 5/29/2014 Laser is 2674 hours used.',
  '1:53:56 PM 5/29/2014 Next FTIR inspection is 248 days later.',
  '1:53:56 PM 5/29/2014 Initialization is succeeded',
  '2:09:48 PM 5/29/2014 Manipulation: Data Calculation, Method=Subtraction, Fact',
  '2:14:21 PM 5/29/2014 Manipulation: Peak Pick, Points=27, Threshold=0.2, Noise',
];

function StatusLog() {
  return (
    <div className="ml-[3px] flex min-h-0 flex-1 flex-col border-t-2 border-l-2 border-[#6c6c6c] bg-white font-['Liberation_Sans',sans-serif] text-[7px] text-[#111]">
      <h2 className="h-3 border-b border-[#777] bg-[#f0f0f0] pl-0.5 leading-3">Status</h2>
      <ol className="flex h-[183px] flex-col justify-between pt-px pl-0.5 leading-[8px] whitespace-nowrap">
        {LOG.map((line) => (
          <li key={line}>{line}</li>
        ))}
      </ol>
      <div className="mt-auto mb-0.5 flex h-[10px] items-center bg-[#f0f0f0]">
        <svg viewBox="0 0 4 6" className="mx-1 h-[5px] w-[3px]" aria-hidden="true">
          <path d="M4 0v6L0 3z" />
        </svg>
        <div className="ml-px flex h-[9px] w-[114px] items-center justify-center rounded-xs border border-[#9a9a9a] bg-linear-to-b from-[#f6f6f6] to-[#cfcfcf]">
          <span className="h-1 w-[5px] border-x border-[#777] bg-[linear-gradient(90deg,transparent_1px,#777_1px,#777_2px,transparent_2px)]" />
        </div>
        <svg viewBox="0 0 4 6" className="mr-1 ml-auto h-[5px] w-[3px]" aria-hidden="true">
          <path d="M0 0v6l4-3z" />
        </svg>
      </div>
    </div>
  );
}

const COLUMNS: [string, string][] = [
  ['No.', 'w-5'],
  ['Peak', 'w-[33px]'],
  ['Intensity', 'w-[47px]'],
  ['Corr. Intensity', 'w-[46px]'],
  ['Base (H)', 'w-[47px]'],
  ['Base (L)', 'w-[47px]'],
  ['Area', 'w-[47px]'],
  ['Corr. Area', 'w-[46px]'],
  ['Area color', 'w-[47px]'],
  ['Comment', 'w-[46px]'],
];

const ROWS = [
  ['1', '540.07', '1.130', '0.999', '601.79', '497.63', '47.165', '32.617', 'Auto', ''],
  ['2', '698.23', '2.106', '1.935', '725.23', '640.37', '52.434', '39.782', 'Auto', ''],
  ['3', '752.24', '2.513', '0.365', '756.10', '725.23', '37.981', '-2.676', 'Auto', ''],
  ['4', '759.95', '2.557', '0.311', '806.25', '756.10', '43.645', '-19.605', 'Auto', ''],
  ['5', '840.96', '0.232', '0.146', '860.25', '806.25', '7.576', '2.799', 'Auto', ''],
  ['6', '906.54', '0.480', '0.362', '925.83', '860.25', '13.534', '8.564', 'Auto', ''],
];

function PeakTable() {
  return (
    <table className="w-[426px] table-fixed border-collapse text-[7px] leading-[9px] text-[#222]">
      <thead>
        <tr className="h-[30px] bg-[#f2f2f2]">
          {COLUMNS.map(([name, width]) => (
            <th key={name} className={`${width} border-r-2 border-b-2 border-[#333] text-center text-[8px] leading-[10px]`}>
              {name}
            </th>
          ))}
        </tr>
      </thead>
      <tbody>
        {ROWS.map((row) => (
          <tr key={row[0]} className="odd:h-[11px] even:h-[10px]">
            {row.map((cell, i) => (
              <td
                key={i}
                className={
                  i === 0
                    ? 'border-r-2 border-b border-[#333] bg-[#f2f2f2] pr-0.5 text-right'
                    : i === 8
                      ? 'border-r border-b border-[#777] text-center'
                      : 'border-r border-b border-[#777] pr-[3px] text-right'
                }
              >
                {cell}
              </td>
            ))}
          </tr>
        ))}
      </tbody>
    </table>
  );
}

function ResultPanel() {
  return (
    <div className="flex min-h-0 flex-1 pt-1.5">
      <span className="mr-1.5 ml-0.5 w-1 border-x border-[#a4a4a4]" />
      <div className="-ml-1 flex min-w-0 flex-1 flex-col">
        <div role="tablist" className="flex items-end leading-[11px]">
          <button role="tab" aria-selected="true" className="h-[14px] w-[58px] border border-b-0 border-[#777] bg-white">Peak Pick Table</button>
          <button role="tab" aria-selected="false" className="h-3 w-[57px] border border-b-0 border-l-0 border-[#777] bg-[#dedede]">Point Pick Table</button>
          <button role="tab" aria-selected="false" className="h-3 w-[50px] border border-b-0 border-l-0 border-[#777] bg-[#dedede]">Pause Record</button>
        </div>
        <div className="mr-[3px] flex min-h-0 flex-1 flex-col border border-t-2 border-[#8a8a8a] bg-white pl-0.5">
          <div className="flex h-[90px] justify-between overflow-hidden border-b border-[#dcdcdc]">
            <div className="border-l border-[#333]">
              <PeakTable />
            </div>
            <div className="mr-[3px] flex w-[11px] flex-col items-center bg-[#f0f0f0] py-1">
              <svg viewBox="0 0 6 4" className="h-[3px] w-[5px]" aria-hidden="true">
                <path d="M0 4h6L3 0z" />
              </svg>
              <span className="mt-1 h-3 w-[10px] rounded-xs border border-[#9a9a9a] bg-linear-to-r from-[#f8f8f8] to-[#d6d6d6]" />
              <svg viewBox="0 0 6 4" className="mt-auto h-[3px] w-[5px]" aria-hidden="true">
                <path d="M0 0h6L3 4z" />
              </svg>
            </div>
          </div>
          <div className="mt-0.5 flex h-4 w-[106px] items-center rounded-sm border border-[#555c74] bg-linear-to-b from-[#eef0f6] to-[#b4bcd2] text-[#111]">
            <button className="flex-1 text-center whitespace-nowrap">Move to Peak Pick screen</button>
            <button aria-label="Choose screen" className="flex h-full w-[15px] items-center justify-center border-l border-[#7c84a0]">
              <svg viewBox="0 0 6 4" className="h-1 w-[6px]" aria-hidden="true">
                <path d="M0 0h6L3 4z" />
              </svg>
            </button>
          </div>
        </div>
      </div>
    </div>
  );
}

function SpectrumWindow() {
  return (
    <section className="absolute inset-y-0 top-1 right-0.5 left-[168px] flex flex-col rounded-t-md border-x-6 border-b-4 border-[#b4d2ea] bg-[#efefef] shadow-[0_0_3px_#000]">
      <div className="-mx-1 rounded-t-sm bg-linear-to-b from-[#a4bedb] to-[#c0d8ec] px-1">
        <TitleBar />
      </div>
      <nav className="flex h-[19px] items-center border-b border-[#8c8c8c] bg-[#f3f3f2] font-['Roboto',sans-serif] text-[8px] text-[#111]">
        <span className="mr-1 ml-px h-3 w-1 border-x border-dotted border-[#b4b4b4]" />
        <div className="flex gap-[7px]">
          {MENUS.map((menu) => (
            <button key={menu}>
              <span className="underline">{menu[0]}</span>
              {menu.slice(1)}
            </button>
          ))}
        </div>
      </nav>
      <div className="border-y-2 border-white">
        <Ribbon />
      </div>
      <div className="flex h-6 border-t border-[#777] bg-[#f4f4f4] pt-px">
        <ToolBar groups={TOOL_GROUPS} />
        <ToolBar groups={VIEW_GROUPS} />
      </div>
      <div className="flex min-h-0 flex-1">
        <aside className="flex w-[264px] flex-col">
          <DockHeader />
          <DataTree />
          <div className="mt-1.5 mb-0.5 border-t border-[#777]" />
          <DockHeader />
          <StatusLog />
          <div className="h-1" />
        </aside>
        <main className="flex min-w-0 flex-1 flex-col pl-[11px] font-['Liberation_Sans',sans-serif] text-[7px] text-[#111]">
          <div role="tablist" className="flex h-5 items-center">
            <button role="tab" aria-selected="true" className="flex h-3 w-[54px] items-center gap-[3px] border-r-2 border-[#222] pl-[7px] text-[8px] font-bold">
              <ChartIcon className="size-[11px]" />
              Test51
            </button>
            <button role="tab" aria-selected="false" className="flex h-3 w-[120px] items-center gap-0.5 border-r-2 border-[#222] pl-0.5">
              <ChartIcon className="size-[11px]" />
              Test51 minus Polystyrene2
            </button>
            <button role="tab" aria-selected="false" className="flex h-3 w-[57px] items-center gap-0.5 border-r-2 border-[#222] pl-1">
              <ChartIcon className="size-[11px]" />
              Normalize
            </button>
          </div>
          <div className="mr-px border-t-2 border-r border-b-2 border-l-2 border-[#333] bg-[#efefef]">
            <Graph
              height={103}
              top={10}
              plotHeight={65}
              zero={63.5}
              perUnit={22.7}
              majors={[[0, '0'], [2, '2']]}
              minorStep={0.4}
              maxTick={2.4}
              absY={44}
              labelGap={13}
              captionGap={22}
            />
            <Graph
              height={299}
              top={8}
              plotHeight={263}
              zero={254.5}
              perUnit={91}
              majors={[[0, '0.0'], [0.5, '0.5'], [1, '1.0'], [1.5, '1.5'], [2, '2.0'], [2.5, '2.5']]}
              minorStep={0.1}
              maxTick={2.7}
              absY={54}
              labelGap={15}
              captionGap={25}
            >
              <PeakLabels plotHeight={263} />
            </Graph>
          </div>
          <ResultPanel />
          <div className="h-1" />
        </main>
      </div>
      <footer className="flex h-[13px] items-center justify-between border-t border-[#a4a4a4] bg-[#f0efef] pr-9 pl-px font-['Liberation_Sans',sans-serif] text-[8px] leading-3 text-[#111]">
        <span>Ready</span>
        <span>NUM</span>
      </footer>
      <svg viewBox="0 0 8 12" className="absolute right-[195px] bottom-[158px] h-3 w-2" aria-hidden="true">
        <path d="M1 1v9l2-2 2 4 1-1-2-3h3z" fill="#fff" stroke="#333" strokeWidth="0.800" />
      </svg>
    </section>
  );
}

/* ---------- taskbar ---------- */

const TRAY: { name: string; paths: Stroke[] }[] = [
  { name: 'Connector', paths: [['M1 2h13v12H1z', '#123', '#1d5c94'], ['M4 11l7-6M6 5h5v5', '#fff']] },
  { name: 'Updater', paths: [['M1 2h13v12H1z', '#1a4a7c', '#2a78b8'], ['M11 5H5v3h6v3H5', '#fff']] },
  { name: 'Monitor', paths: [['M3 1h10v14H3z', '#1a6a2a', '#2fa04a'], ['M5 4h6M5 8h6M5 12h6', '#cfc']] },
  { name: 'Search service', paths: [['M4 4h7v7H4z', '#7a7', '#d8f0a0'], ['M10 10l4 4', '#555']] },
  { name: 'Reader', paths: [['M2 1h12v14H2z', '#8a1410', '#c8201a'], ['M4 12l4-8 4 7', '#fff']] },
  { name: 'Instrument', paths: [['M1 13L5 3l3 8 3-8 3 10z', '#0a6a1a', '#d83a2a']] },
  { name: 'Safely remove', paths: [['M3 4h9v8H3z', '#1f7a34', '#3fb45a'], ['M8 8l6 6', '#eee']] },
  { name: 'Sound manager', paths: [['M2 3h12v10H2z', '#345', '#dfe8f4'], ['M8 5l3 6', '#456']] },
  { name: 'Sync', paths: [['M8 2a6 6 0 1 0 1 0z', '#123f7c', '#2a7ad0'], ['M5 8h6M8 5v6', '#fff']] },
  { name: 'Snipping', paths: [['M3 13L13 3', '#c22'], ['M3 4l9 9', '#fff']] },
  { name: 'Flag', paths: [['M4 1v14', '#fff'], ['M5 2h8l-2 3 2 3H5z', '#eef', '#fff']] },
  { name: 'Network', paths: [['M3 3h11v8H3zM8 11v3M5 14h7', '#f4f8ff', '#567']] },
  { name: 'Volume', paths: [['M2 6h3l4-4v12l-4-4H2z', '#fff', '#fff'], ['M11 5c2 2 2 4 0 6M13 3c3 3 3 7 0 10', '#fff']] },
];

const TASK_BUTTON = 'flex h-full items-center justify-center border-x border-[#e8f1fa] shadow-[0_0_2px_#345]';

function Taskbar() {
  return (
    <footer className="flex h-[27px] items-center border-t border-b-2 border-t-[#cfe0f0] border-b-black bg-linear-to-b from-[#b0b8dc] to-[#a2c1dc]">
      <button aria-label="Start" className="flex h-full w-10 items-center justify-center bg-[#7f98b8]">
        <svg viewBox="0 0 24 24" className="size-6" aria-hidden="true">
          <circle cx="12" cy="12" r="11.500" fill="#20568c" stroke="#a8cbe6" />
          <path d="M2 9a11 11 0 0 1 20 0c-5-4-15-4-20 0z" fill="#7aaed2" />
          <path d="M5 8c2-1 4-1 6 0l-1 4c-2-1-4-1-6 0z" fill="#e8642a" />
          <path d="M12 8c2 1 4 1 6 0l-1 4c-2 1-4 1-6 0z" fill="#8cc63a" />
          <path d="M4 13c2-1 4-1 6 0l-1 4c-2-1-4-1-6 0z" fill="#4ab2f0" />
          <path d="M11 13c2 1 4 1 6 0l-1 4c-2 1-4 1-6 0z" fill="#fcd23c" />
        </svg>
      </button>
      <button aria-label="Internet Explorer" className={`${TASK_BUTTON} w-9 bg-[#bfd3e6]`}>
        <svg viewBox="0 0 24 24" className="size-[21px]" aria-hidden="true">
          <path d="M5 13h14c0-9-14-9-14 0 0 7 10 8 13 3" fill="none" stroke="#2a9ae0" strokeWidth="3.500" />
          <path d="M2 20C-1 14 14 1 22 3c2 2-1 6-3 8" fill="none" stroke="#f0c43a" strokeWidth="1.600" />
        </svg>
      </button>
      <span className="ml-0.5 h-full w-px bg-[#dbe8f4]" />
      <button aria-label="Explorer" className="flex h-full w-[44px] items-center justify-center">
        <svg viewBox="0 0 24 20" className="h-5 w-[22px]" aria-hidden="true">
          <path d="M2 3h8l2 2h10v13H2z" fill="#eed88a" stroke="#b8983c" />
          <path d="M4 7h16v5H4z" fill="#faf0c0" />
          <path d="M5 19v-5c0-2 14-2 14 0v5h-3v-4H8v4z" fill="#8cc4e8" stroke="#4a8ab8" />
          <path d="M7 3h3M12 4h3" stroke="#4a9a3a" strokeWidth="1.500" />
        </svg>
      </button>
      <button aria-label="Media Player" className="mr-1 flex h-full w-[38px] items-center justify-center">
        <svg viewBox="0 0 20 20" className="size-[18px]" aria-hidden="true">
          <path d="M3 3h14v14H3z" fill="#a8cbe4" stroke="#7aa4c4" />
          <circle cx="9" cy="10" r="7" fill="#ee8222" stroke="#fff" />
          <path d="M7 6l6 4-6 4z" fill="#fff" />
        </svg>
      </button>
      <div className="flex h-full gap-[3px]">
        <button aria-label="AMCap" className={`${TASK_BUTTON} w-[38px] bg-[#c6d6e8]`}>
          <AmCapIcon className="size-[22px]" />
        </button>
        <button aria-label="IRsolution" className={`${TASK_BUTTON} w-[38px] bg-[#b9cde2]`}>
          <svg viewBox="0 0 24 20" className="h-5 w-6" aria-hidden="true">
            <path d="M5 5c-4 3-4 9 1 12M8 6c-3 3-2 8 1 10M19 5c4 3 4 9-1 12M16 6c3 3 2 8-1 10" stroke="#666c78" strokeWidth="2" fill="none" />
            <path d="M4 13h3l2-4 2 6 1-14 2 15 2-6 1 3h4" stroke="#e03a34" strokeWidth="1.300" fill="none" />
          </svg>
        </button>
        <button aria-label="Spectrum" className={`${TASK_BUTTON} w-[39px] bg-[#e4eef8]`}>
          <svg viewBox="0 0 22 18" className="h-[18px] w-[22px]" aria-hidden="true">
            <path d="M2 1h18l1 14-19 2z" fill="#eaf6ff" stroke="#23385c" strokeWidth="1.500" />
            <path d="M4 14l1-4 1 2 1-8 2 9h1l1-5 2 5h1l1-9 2 9 2-3v3z" fill="#2a8ae8" stroke="#1c6ac4" />
          </svg>
        </button>
      </div>
      <div className="ml-auto flex items-center gap-[5px]">
        {TRAY.map((item) => (
          <button key={item.name} aria-label={item.name}>
            <Glyph paths={item.paths} className="size-[11px]" />
          </button>
        ))}
      </div>
      <div className="w-[55px] px-1 text-center font-['Roboto',sans-serif] text-[8px] leading-[11px] text-white">
        <div>2:14 PM</div>
        <div>5/29/2014</div>
      </div>
      <span className="h-full w-[7px] border-l border-[#7f98b8] bg-[#b4cce2]" />
    </footer>
  );
}

export default function App() {
  return (
    <div className="flex h-screen flex-col overflow-hidden bg-[#06123c] font-['Open_Sans',sans-serif]">
      <div className="relative min-h-0 flex-1 overflow-hidden border-t-3 border-[#020a3a] bg-linear-to-b from-[#0a48ae] via-[#0b7ad6] via-50% to-[#48ccf0] to-80%">
        <Rays />
        <div className="absolute -top-[3px] left-0">
          <DesktopIcons />
        </div>
        <div className="absolute inset-x-0 -top-[3px] bottom-0">
          <LabSolutionsWindow />
          <SpectrumWindow />
        </div>
      </div>
      <Taskbar />
    </div>
  );
}
